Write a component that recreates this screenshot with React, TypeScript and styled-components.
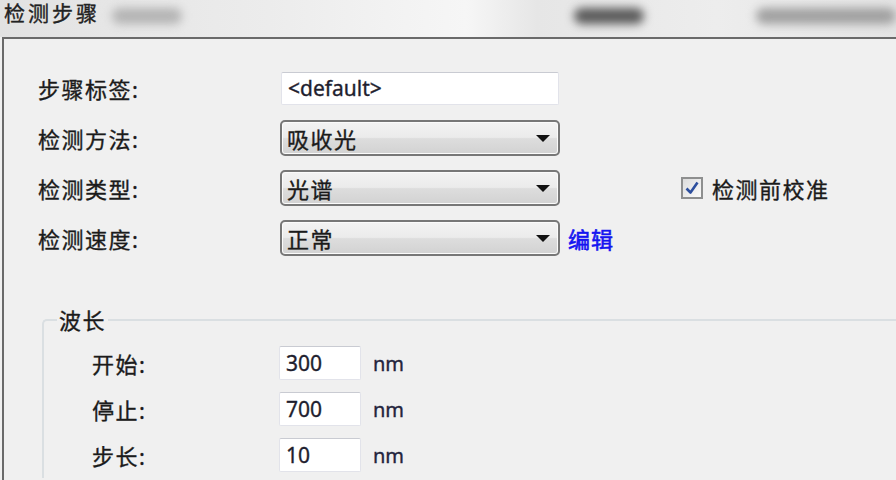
import React from 'react';
import styled, {createGlobalStyle} from 'styled-components';

const GlobalStyle = createGlobalStyle`
  body {
    margin: 0;
    background: #f0f0f0;
    font-family: "Noto Sans", "Noto Sans CJK SC", sans-serif;
  }
`;

const Window = styled.div`
  width: 896px;
  height: 480px;
  overflow: hidden;
  display: flex;
  flex-direction: column;
  background: #f0f0f0;
  color: #1b1b1b;
  -webkit-text-stroke: 0.35px currentColor;
`;

const TitleStrip = styled.div`
  height: 37px;
  flex-shrink: 0;
  display: flex;
  align-items: flex-start;
  overflow: hidden;
  background: linear-gradient(90deg, #e2e2e2 0%, #ececec 30%, #f6f6f6 52%, #e6e6e6 60%, #ededed 80%, #e4e4e4 100%);
`;

const Title = styled.div`
  font-size: 21px;
  letter-spacing: 3px;
  line-height: 26px;
  margin: 0 0 0 4px;
  color: #222;
`;

const Blur = styled.div<{$w: number; $gap: number; $tone: string}>`
  width: ${(p) => p.$w}px;
  height: 16px;
  margin: 8px 0 0 ${(p) => p.$gap}px;
  border-radius: 8px;
  background: ${(p) => p.$tone};
  filter: blur(5px);
  flex-shrink: 0;
`;

const Panel = styled.div`
  flex: 1;
  margin-left: 2px;
  border-top: 2px solid #6a6a6a;
  border-left: 2px solid #6a6a6a;
  padding: 24px 0 0 34px;
`;

const FormRow = styled.div`
  display: flex;
  align-items: center;
  height: 50px;
`;

const Label = styled.div<{$w: number}>`
  width: ${(p) => p.$w}px;
  flex-shrink: 0;
  font-size: 22px;
  letter-spacing: 1.5px;
`;

const TextBox = styled.div<{$w: number; $h: number}>`
  width: ${(p) => p.$w}px;
  height: ${(p) => p.$h}px;
  box-sizing: border-box;
  display: flex;
  align-items: center;
  padding-left: 6px;
  background: #fff;
  border: 1px solid #e2e3ea;
  border-top-color: #c9cbd2;
  border-radius: 2px;
  font-size: 21px;
  color: #1e1e2e;
`;

const Combo = styled.div`
  width: 280px;
  height: 36px;
  box-sizing: border-box;
  display: flex;
  align-items: center;
  justify-content: space-between;
  padding: 0 8px 0 5px;
  border: 2px solid #777;
  border-radius: 5px;
  box-shadow: inset 0 0 0 1px #fbfbfb;
  background: linear-gradient(#f3f3f3 0%, #ebebeb 48%, #dddddd 52%, #d2d2d2 100%);
  font-size: 22px;
  letter-spacing: 1.5px;
`;

const Arrow = styled.div`
  width: 0;
  height: 0;
  border-left: 7.5px solid transparent;
  border-right: 7.5px solid transparent;
  border-top: 7px solid #111;
`;

const EditLink = styled.a`
  margin-left: 8px;
  font-size: 22px;
  letter-spacing: 1px;
  color: #1515f0;
  text-decoration: none;
  cursor: pointer;
  -webkit-text-stroke: 0.6px currentColor;
`;

const CheckWrap = styled.label`
  display: flex;
  align-items: center;
  gap: 9px;
  margin-left: 121px;
  font-size: 22px;
  letter-spacing: 1.5px;
`;

const CheckBox = styled.div`
  width: 22px;
  height: 22px;
  box-sizing: border-box;
  border: 2px solid #8e8f8f;
  background: linear-gradient(135deg, #dcdcdc, #fbfbfb);
  display: flex;
  align-items: center;
  justify-content: center;
`;

const GroupBox = styled.fieldset`
  margin: 42px 0 0 4px;
  padding: 0;
  border: 2px solid #dadfe2;
  border-right: none;
  border-bottom: none;
  border-top-left-radius: 5px;
  min-width: 0;
`;

const Legend = styled.legend`
  margin-left: 13px;
  padding: 0 2px;
  font-size: 22px;
  line-height: 30px;
  letter-spacing: 1.5px;
`;

const GroupBody = styled.div`
  padding: 5px 0 0 48px;
`;

const UnitRow = styled.div`
  display: flex;
  align-items: center;
  height: 46px;
`;

const Unit = styled.span`
  margin-left: 12px;
  font-size: 20px;
  color: #24243c;
`;

const ranges = [
  {label: '开始:', value: '300'},
  {label: '停止:', value: '700'},
  {label: '步长:', value: '10'},
];

const App: React.FC = () => {
  return (
    <Window>
      <GlobalStyle />
      <TitleStrip>
        <Title>检测步骤</Title>
        <Blur $w={70} $gap={12} $tone="#b4b4b4" />
        <Blur $w={70} $gap={392} $tone="#5a5a5a" />
        <Blur $w={140} $gap={112} $tone="#a0a0a0" />
      </TitleStrip>
      <Panel>
        <FormRow>
          <Label $w={243}>步骤标签:</Label>
          <TextBox $w={278} $h={33}>&lt;default&gt;</TextBox>
        </FormRow>
        <FormRow>
          <Label $w={242}>检测方法:</Label>
          <Combo>吸收光<Arrow /></Combo>
        </FormRow>
        <FormRow>
          <Label $w={242}>检测类型:</Label>
          <Combo>光谱<Arrow /></Combo>
          <CheckWrap>
            <CheckBox>
              <svg width="16" height="16" viewBox="0 0 16 16">
                <path d="M2.5 8.5 L6.5 12.5 L13.5 2.5" fill="none" stroke="#2d4f9e" strokeWidth="2.6" strokeLinejoin="round" />
              </svg>
            </CheckBox>
            检测前校准
          </CheckWrap>
        </FormRow>
        <FormRow>
          <Label $w={242}>检测速度:</Label>
          <Combo>正常<Arrow /></Combo>
          <EditLink>编辑</EditLink>
        </FormRow>
        <GroupBox>
          <Legend>波长</Legend>
          <GroupBody>
            {ranges.map((r) => (
              <UnitRow key={r.label}>
                <Label $w={187}>{r.label}</Label>
                <TextBox $w={82} $h={34}>{r.value}</TextBox>
                <Unit>nm</Unit>
              </UnitRow>
            ))}
          </GroupBody>
        </GroupBox>
      </Panel>
    </Window>
  );
};

export default App;
